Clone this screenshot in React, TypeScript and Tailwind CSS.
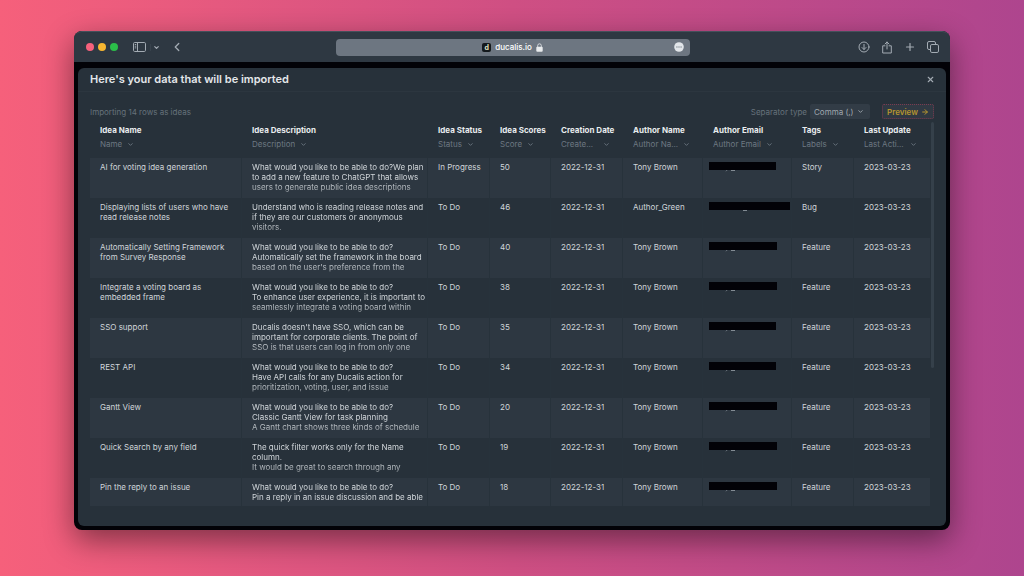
import { ArrowRight, ChevronDown, ChevronLeft, Plus, X } from 'lucide-react'

const columns = [
  { title: 'Idea Name', field: 'Name', width: 'w-[152px]' },
  { title: 'Idea Description', field: 'Description', width: 'w-[186px]' },
  { title: 'Idea Status', field: 'Status', width: 'w-[62px]' },
  { title: 'Idea Scores', field: 'Score', width: 'w-[61px]' },
  { title: 'Creation Date', field: 'Create...', width: 'w-[72px]', fill: true },
  { title: 'Author Name', field: 'Author Na...', width: 'w-[80px]', fill: true },
  { title: 'Author Email', field: 'Author Email', width: 'w-[89px]' },
  { title: 'Tags', field: 'Labels', width: 'w-[62px]' },
  { title: 'Last Update', field: 'Last Acti...', width: 'w-[76px]', fill: true },
]

const ideas = [
  {
    name: ['AI for voting idea generation'],
    description: ['What would you like to be able to do?We plan', 'to add a new feature to ChatGPT that allows', 'users to generate public idea descriptions'],
    status: 'In Progress', score: 50, author: 'Tony Brown', tag: 'Story', bar: 67,
  },
  {
    name: ['Displaying lists of users who have', 'read release notes'],
    description: ['Understand who is reading release notes and', 'if they are our customers or anonymous', 'visitors.'],
    status: 'To Do', score: 46, author: 'Author_Green', tag: 'Bug', bar: 81,
  },
  {
    name: ['Automatically Setting Framework', 'from Survey Response'],
    description: ['What would you like to be able to do?', 'Automatically set the framework in the board', "based on the user's preference from the"],
    status: 'To Do', score: 40, author: 'Tony Brown', tag: 'Feature', bar: 68,
  },
  {
    name: ['Integrate a voting board as', 'embedded frame'],
    description: ['What would you like to be able to do?', 'To enhance user experience, it is important to', 'seamlessly integrate a voting board within'],
    status: 'To Do', score: 38, author: 'Tony Brown', tag: 'Feature', bar: 68,
  },
  {
    name: ['SSO support'],
    description: ["Ducalis doesn't have SSO, which can be", 'important for corporate clients. The point of', 'SSO is that users can log in from only one'],
    status: 'To Do', score: 35, author: 'Tony Brown', tag: 'Feature', bar: 67,
  },
  {
    name: ['REST API'],
    description: ['What would you like to be able to do?', 'Have API calls for any Ducalis action for', 'prioritization, voting, user, and issue'],
    status: 'To Do', score: 34, author: 'Tony Brown', tag: 'Feature', bar: 67,
  },
  {
    name: ['Gantt View'],
    description: ['What would you like to be able to do?', 'Classic Gantt View for task planning', 'A Gantt chart shows three kinds of schedule'],
    status: 'To Do', score: 20, author: 'Tony Brown', tag: 'Feature', bar: 68,
  },
  {
    name: ['Quick Search by any field'],
    description: ['The quick filter works only for the Name', 'column.', 'It would be great to search through any'],
    status: 'To Do', score: 19, author: 'Tony Brown', tag: 'Feature', bar: 68,
  },
  {
    name: ['Pin the reply to an issue'],
    description: ['What would you like to be able to do?', 'Pin a reply in an issue discussion and be able'],
    status: 'To Do', score: 18, author: 'Tony Brown', tag: 'Feature', bar: 68,
  },
]

function Lines({ lines }: { lines: string[] }) {
  return (
    <>
      {lines.map((line) => (
        <span key={line} className="block whitespace-nowrap">{line}</span>
      ))}
    </>
  )
}

function Toolbar() {
  return (
    <header className="grid h-[31px] shrink-0 grid-cols-[1fr_354px_1fr] items-center rounded-t-lg border-t border-[#45505b] bg-[#2e3842] pr-[11px] pl-3 text-[#a3abb3]">
      <div className="flex items-center">
        <div className="flex gap-1">
          <span className="size-2 rounded-full bg-[#f6617c]" />
          <span className="size-2 rounded-full bg-[#f7b731]" />
          <span className="size-2 rounded-full bg-[#2bbd49]" />
        </div>
        <button aria-label="Sidebar" className="ml-[15px]">
          <svg viewBox="0 0 13 10" className="h-[10px] w-[13px]" fill="none" stroke="currentColor" strokeWidth="1">
            <rect x="0.5" y="0.5" width="12" height="9" rx="1.2" />
            <path d="M4.500 0.500v9M1.800 2.500h1.400M1.800 4.200h1.400M1.800 5.900h1.400" />
          </svg>
        </button>
        <button aria-label="Sidebar options" className="ml-1 border-l border-[#38424c] pl-0.5">
          <ChevronDown className="size-[7px]" strokeWidth={4} />
        </button>
        <button aria-label="Back" className="ml-[10px]">
          <ChevronLeft className="size-[14px]" strokeWidth={2.2} />
        </button>
      </div>

      <div className="grid h-[17px] grid-cols-[1fr_auto_1fr] items-center rounded bg-[#6d7681] px-[6px] text-white">
        <span />
        <div className="flex items-center gap-1 text-[8px] font-medium">
          <span className="flex size-[9px] items-center justify-center rounded-xs bg-[#14191d] text-[7px] leading-none font-bold text-[#e3e4c4]">d</span>
          <span>ducalis.io</span>
          <svg viewBox="0 0 7 9" className="h-[9px] w-[7px]" fill="#e8ebed">
            <rect x="0.3" y="3.8" width="6.4" height="5" rx="1" />
            <path d="M1.7 4.2V2.6a1.8 1.8 0 0 1 3.6 0v1.6" fill="none" stroke="#e8ebed" strokeWidth="0.8" />
          </svg>
        </div>
        <button aria-label="Page menu" className="justify-self-end">
          <svg viewBox="0 0 10 10" className="size-[10px]">
            <circle cx="5" cy="5" r="4.8" fill="#e2e6ea" />
            <path d="M2.2 5h1.4M4.3 5h1.4M6.400 5h1.400" stroke="#6d7681" strokeWidth="0.9" />
          </svg>
        </button>
      </div>

      <div className="flex items-center justify-end gap-[11px]">
        <button aria-label="Downloads">
          <svg viewBox="0 0 12 12" className="size-3" fill="none" stroke="currentColor" strokeLinecap="round" strokeLinejoin="round">
            <circle cx="6" cy="6" r="5" />
            <path d="M6 3.4v5M4 6.5l2 2 2-2" />
          </svg>
        </button>
        <button aria-label="Share">
          <svg viewBox="0 0 12 13" className="h-[13px] w-3" fill="none" stroke="currentColor" strokeLinecap="round" strokeLinejoin="round">
            <path d="M4 4.8H1.7V12h8.6V4.8H8M6 8V1M4 3l2-2 2 2" />
          </svg>
        </button>
        <button aria-label="New tab">
          <Plus className="size-3" strokeWidth={2.4} />
        </button>
        <button aria-label="Show tabs">
          <svg viewBox="0 0 12 12" className="size-3" fill="none" stroke="currentColor">
            <rect x="3.5" y="3.5" width="8" height="8" rx="1.4" />
            <path d="M3.5 8.5H2A1.5 1.5 0 0 1 .5 7V2A1.5 1.5 0 0 1 2 .5h5A1.5 1.5 0 0 1 8.5 2v1.5" />
          </svg>
        </button>
      </div>
    </header>
  )
}

function ImportTable() {
  return (
    <div className="flex min-h-0 flex-1 items-start gap-px overflow-hidden">
      <table className="w-full table-fixed border-separate border-spacing-0 text-left text-[8px] leading-[10px]">
        <colgroup>
          {columns.map((col) => (
            <col key={col.title} className={col.width} />
          ))}
        </colgroup>
        <thead>
          <tr className="h-9">
            {columns.map((col) => (
              <th key={col.title} className="pt-[3px] pr-[13px] pl-[10px] align-top whitespace-nowrap">
                <span className="font-bold text-[#e9ecee]">{col.title}</span>
                <label className="mt-[3px] flex items-center gap-[5px] font-normal text-[#6d7882]">
                  <select
                    aria-label={`Field for ${col.title}`}
                    className={`h-3 appearance-none bg-transparent ${col.fill ? 'min-w-0 flex-1' : 'field-sizing-content'}`}
                  >
                    <option>{col.field}</option>
                  </select>
                  <ChevronDown className="size-[7px] shrink-0" strokeWidth={3} />
                </label>
              </th>
            ))}
          </tr>
        </thead>
        <tbody className="text-[#d0d5d9]">
          {ideas.map((idea, i) => (
            <tr
              key={idea.score}
              className="h-10 odd:bg-[#2d3741] [&>td]:border-r [&>td]:border-[#27323b] [&>td]:pt-1 [&>td]:pl-[10px] [&>td]:align-top [&>td]:whitespace-nowrap [&>td:last-child]:border-r-0"
            >
              <td><Lines lines={idea.name} /></td>
              <td>
                <div className="h-8 overflow-hidden mask-[linear-gradient(to_bottom,black_60%,transparent_150%)]">
                  <Lines lines={idea.description} />
                </div>
              </td>
              <td>{idea.status}</td>
              <td>{idea.score}</td>
              <td>2022-12-31</td>
              <td>{idea.author}</td>
              <td>
                {/* redacted address */}
                <svg className="-ml-1 h-[10px]" style={{ width: idea.bar }} role="img" aria-label="Hidden email">
                  <rect width="100%" height="8" fill="#020207" />
                  <path d={i === 1 ? 'M34 8.5h4' : 'M17 9.2l1-1M22 8.5h4'} stroke="#828b93" strokeWidth="1" />
                </svg>
              </td>
              <td>{idea.tag}</td>
              <td>2023-03-23</td>
            </tr>
          ))}
        </tbody>
      </table>
      <div className="h-[64%] w-[3px] shrink-0 rounded-full bg-[#35404a]" />
    </div>
  )
}

export default function App() {
  return (
    <div className="flex h-screen flex-col bg-linear-to-r from-[#f6607b] via-[#cf4f83] to-[#ae458e] px-[74px] pt-[31px] pb-[46px] font-['Inter',sans-serif]">
      <div className="flex min-h-0 flex-1 flex-col rounded-lg bg-[#020207] shadow-[0_10px_30px_rgba(0,0,0,0.45)]">
        <Toolbar />
        <main className="mx-1 mt-[6px] mb-1 flex min-h-0 flex-1 flex-col rounded-md bg-[#27313a]">
          <div className="flex h-6 shrink-0 items-center justify-between border-b border-[#2c363f] pr-[11px] pl-3">
            <h1 className="text-[11px] font-semibold text-[#e4e7ea]">Here's your data that will be imported</h1>
            <button aria-label="Close" className="text-[#a3abb3]">
              <X className="size-[9px]" strokeWidth={3} />
            </button>
          </div>

          <div className="flex min-h-0 flex-1 flex-col pt-3 pr-3 pb-5 pl-3 text-[8px]">
            <div className="flex h-[15px] shrink-0 items-center text-[#66717b]">
              <p className="flex-1">Importing 14 rows as ideas</p>
              <label htmlFor="separator">Separator type</label>
              <div className="ml-[3px] flex h-[15px] w-[60px] items-center rounded-xs bg-[#323c46] pr-[6px] pl-1 text-[#a0a8af]">
                <select id="separator" className="min-w-0 flex-1 appearance-none bg-transparent">
                  <option>Comma (,)</option>
                </select>
                <ChevronDown className="size-[7px]" strokeWidth={3} />
              </div>
              <button className="ml-3 flex h-[15px] w-[52px] items-center justify-between rounded-xs border border-dotted border-[#7b3b50] bg-[#303943] px-1 font-semibold text-[#b4952f]">
                Preview
                <ArrowRight className="size-2" strokeWidth={3} />
              </button>
            </div>
            <div className="mt-[3px] flex min-h-0 flex-1">
              <ImportTable />
            </div>
          </div>
        </main>
      </div>
    </div>
  )
}
